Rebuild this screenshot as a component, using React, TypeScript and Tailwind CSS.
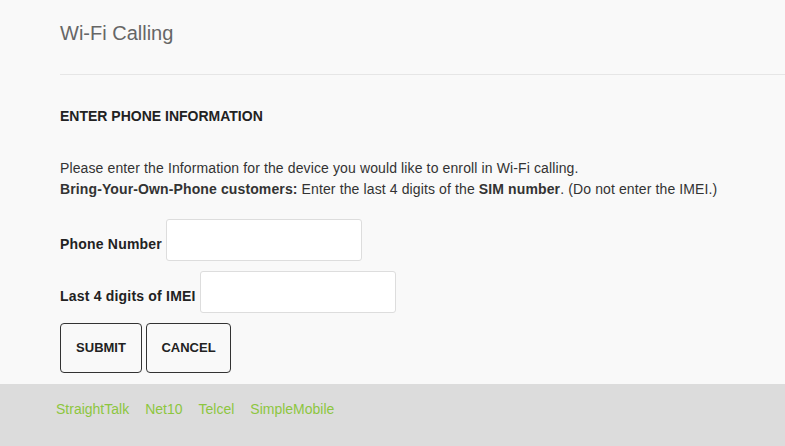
export default function App() {
  return (
    <div className="min-h-[446px] flex flex-col bg-[#f9f9f9] font-['Liberation_Sans',Arial,sans-serif] text-[#333]">
      <div className="flex-1 pl-[60px]">
        <h1 className="pt-[20px] h-[75px] text-[20px] leading-[26px] text-[#666] border-b border-[#e6e6e6]">
          Wi-Fi Calling
        </h1>
        <h2 className="mt-[32px] text-[14px] leading-[18px] font-bold text-[#222]">ENTER PHONE INFORMATION</h2>
        <p className="mt-[33px] text-[14px] leading-[21px] tracking-[0.12px]">
          Please enter the Information for the device you would like to enroll in Wi-Fi calling.
          <br />
          <b>Bring-Your-Own-Phone customers:</b> Enter the last 4 digits of the <b>SIM number</b>. (Do not enter the IMEI.)
        </p>
        <div className="mt-[19px] flex items-center gap-[4px]">
          <label className="text-[14px] font-bold pt-[8px] text-[#222] tracking-[0.2px]">Phone Number</label>
          <input className="w-[196px] h-[42px] bg-white border border-[#ddd] rounded-[3px]" />
        </div>
        <div className="mt-[10px] flex items-center gap-[4px]">
          <label className="text-[14px] font-bold pt-[8px] text-[#222] tracking-[0.2px]">Last 4 digits of IMEI</label>
          <input className="w-[196px] h-[42px] bg-white border border-[#ddd] rounded-[3px]" />
        </div>
        <div className="mt-[10px] flex gap-[4px]">
          <button className="w-[82px] h-[50px] border border-[#333] rounded-[4px] text-[13px] font-bold text-[#222]">SUBMIT</button>
          <button className="w-[85px] h-[50px] border border-[#333] rounded-[4px] text-[13px] font-bold text-[#222]">CANCEL</button>
        </div>
        <div className="h-[10px]" />
      </div>
      <footer className="h-[62px] bg-[#dcdcdc] pl-[56px] pt-[16px] flex gap-[16px] text-[14px] leading-[18px] text-[#8dc63f]">
        <a>StraightTalk</a>
        <a>Net10</a>
        <a>Telcel</a>
        <a>SimpleMobile</a>
      </footer>
    </div>
  );
}
